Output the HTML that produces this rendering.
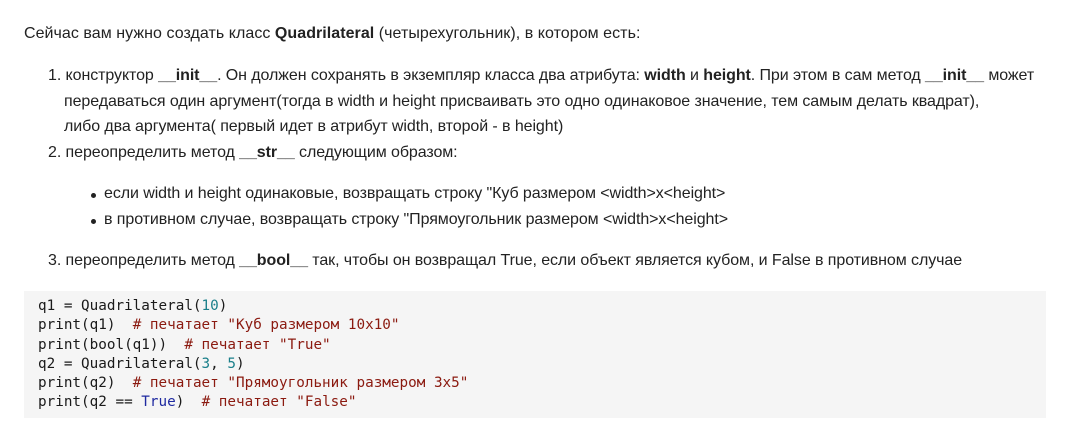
<!DOCTYPE html>
<html><head><meta charset="utf-8"><style>
body{margin:0;background:#fff;width:1065px;height:435px;overflow:hidden;font-family:"Liberation Sans",Arial,sans-serif;font-size:16px;color:#222;letter-spacing:-0.08px}
.l{position:absolute;white-space:nowrap;line-height:20px}
b{font-weight:bold}
.code{position:absolute;left:24px;top:291px;width:1022px;height:127px;background:#f5f5f5}
.code pre{margin:0;position:absolute;left:14px;top:6px;font-family:"DejaVu Sans Mono","Liberation Mono",monospace;font-size:14.3px;line-height:19.3px;color:#1a1a1a;letter-spacing:0}
.c{color:#8b1a10}.n{color:#1a7f8a}.k{color:#1f2aa0}
.dot{position:absolute;width:5px;height:5px;border-radius:50%;background:#222}
</style></head><body>
<div class="l" style="left:24px;top:24px;letter-spacing:0.05px">Сейчас вам нужно создать класс <b>Quadrilateral</b> (четырехугольник), в котором есть:</div>
<div class="l" style="left:48px;top:66px">1. конструктор <b>__init__</b>. Он должен сохранять в экземпляр класса два атрибута: <b>width</b> и <b>height</b>. При этом в сам метод <b>__init__</b> может</div>
<div class="l" style="left:64px;top:92px">передаваться один аргумент(тогда в width и height присваивать это одно одинаковое значение, тем самым делать квадрат),</div>
<div class="l" style="left:64px;top:117px">либо два аргумента( первый идет в атрибут width, второй - в height)</div>
<div class="l" style="left:48px;top:143px">2. переопределить метод <b>__str__</b> следующим образом:</div>
<div class="dot" style="left:91px;top:193px"></div>
<div class="l" style="left:104px;top:184px">если width и height одинаковые, возвращать строку "Куб размером &lt;width&gt;x&lt;height&gt;</div>
<div class="dot" style="left:91px;top:219px"></div>
<div class="l" style="left:104px;top:210px">в противном случае, возвращать строку "Прямоугольник размером &lt;width&gt;x&lt;height&gt;</div>
<div class="l" style="left:48px;top:251px">3. переопределить метод <b>__bool__</b> так, чтобы он возвращал True, если объект является кубом, и False в противном случае</div>
<div class="code"><pre>q1 = Quadrilateral(<span class="n">10</span>)
print(q1)  <span class="c"># печатает "Куб размером 10x10"</span>
print(bool(q1))  <span class="c"># печатает "True"</span>
q2 = Quadrilateral(<span class="n">3</span>, <span class="n">5</span>)
print(q2)  <span class="c"># печатает "Прямоугольник размером 3x5"</span>
print(q2 == <span class="k">True</span>)  <span class="c"># печатает "False"</span></pre></div>
</body></html>
